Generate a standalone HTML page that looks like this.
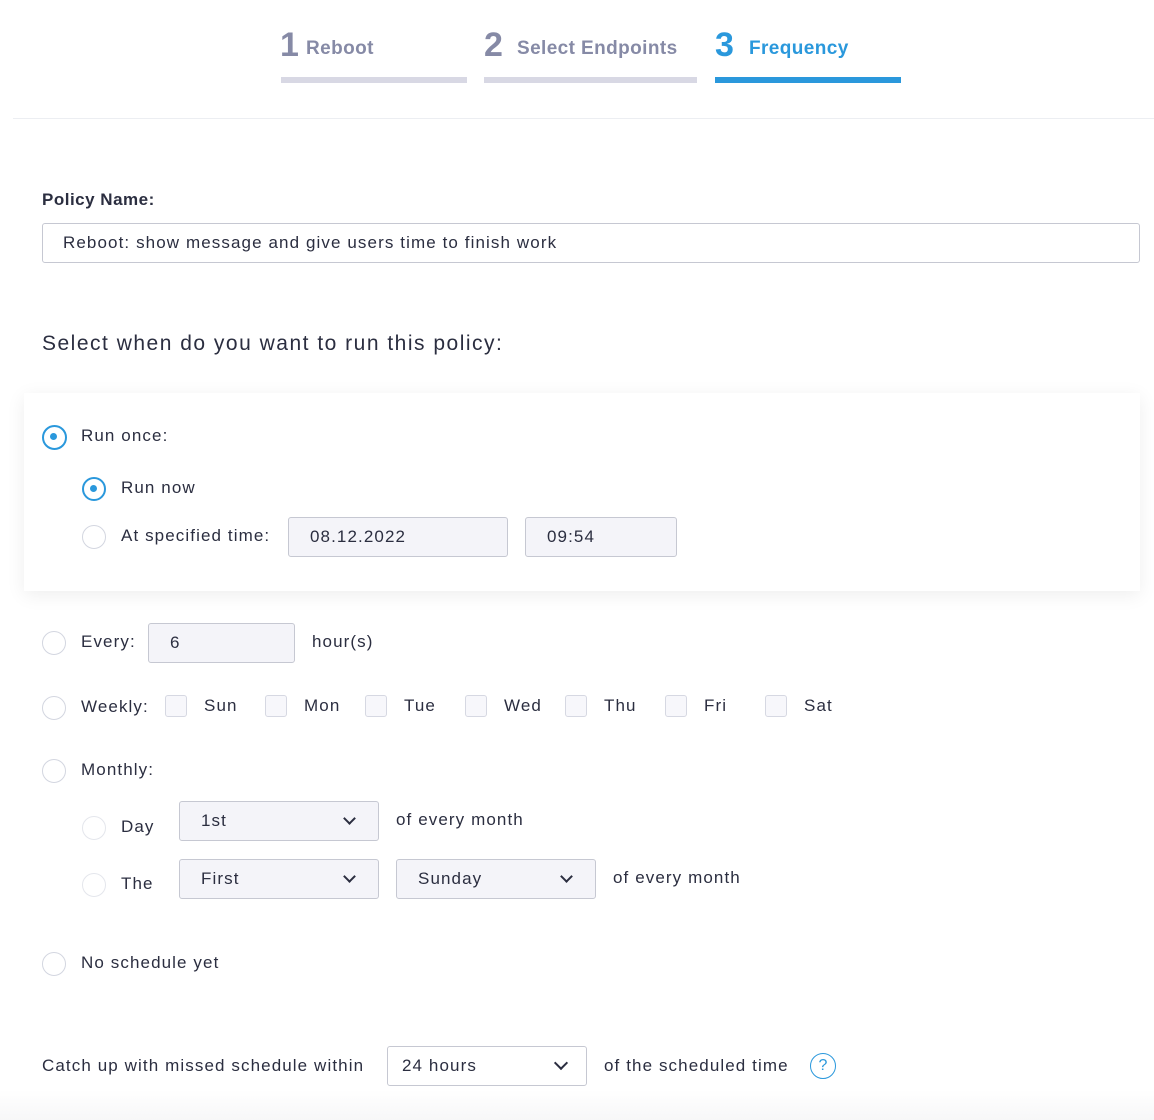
<!DOCTYPE html><html><head><style>
body{margin:0;width:1154px;height:1120px;background:#fff;font-family:"Liberation Sans",sans-serif;color:#2b2e40;position:relative;overflow:hidden}
.a{position:absolute}
.t{font-size:17px;line-height:20px;letter-spacing:1.1px}
.r{position:absolute;width:22px;height:22px;border:1.5px solid #d3d6e0;border-radius:50%;box-sizing:border-box}
.r.on{border:2px solid #2a98dc}
.r.on::after{content:"";position:absolute;left:6px;top:6px;width:7px;height:7px;border-radius:50%;background:#2a98dc}
.in{position:absolute;box-sizing:border-box;border:1px solid #c6c8d2;border-radius:3px;background:#f4f4f9;font-size:17px;letter-spacing:1.1px;padding-left:21px;line-height:38px;height:40px}
.cb{position:absolute;width:22px;height:22px;border:1px solid #d6d8e2;border-radius:3px;background:#f7f7fb;box-sizing:border-box;top:695px}
.chev{position:absolute;right:24px;top:12px;width:7px;height:7px;border-right:2px solid #2b2e40;border-bottom:2px solid #2b2e40;transform:rotate(45deg)}
.step{position:absolute;font-weight:bold;color:#868aa6}
</style></head><body>
<div class="step" style="left:280px;top:26px;font-size:34px">1</div>
<div class="step" style="left:306px;top:38px;font-size:19px;letter-spacing:0.4px">Reboot</div>
<div class="a" style="left:281px;top:77px;width:186px;height:6px;background:#d8d8e4"></div>
<div class="step" style="left:484px;top:26px;font-size:34px">2</div>
<div class="step" style="left:517px;top:38px;font-size:19px;letter-spacing:0.4px">Select Endpoints</div>
<div class="a" style="left:484px;top:77px;width:213px;height:6px;background:#d8d8e4"></div>
<div class="step" style="left:715px;top:26px;font-size:34px;color:#2a98dc">3</div>
<div class="step" style="left:749px;top:38px;font-size:19px;color:#2a98dc;letter-spacing:0.4px">Frequency</div>
<div class="a" style="left:715px;top:77px;width:186px;height:6px;background:#2a98dc"></div>
<div class="a" style="left:13px;top:118px;width:1141px;height:1px;background:#eceef2"></div>

<div class="a t" style="left:42px;top:190px;font-weight:bold;letter-spacing:0.5px">Policy Name:</div>
<div class="a" style="left:42px;top:223px;width:1098px;height:40px;border:1px solid #c6c8d2;border-radius:3px;box-sizing:border-box;font-size:17px;letter-spacing:1.1px;line-height:38px;padding-left:20px">Reboot: show message and give users time to finish work</div>
<div class="a" style="left:42px;top:332px;font-size:21px;letter-spacing:1.5px">Select when do you want to run this policy:</div>

<div class="a" style="left:24px;top:393px;width:1116px;height:198px;background:#fff;box-shadow:0 4px 18px rgba(0,0,0,0.07)"></div>
<div class="r on" style="left:42px;top:425px;width:25px;height:25px"></div>
<div class="a t" style="left:81px;top:426px">Run once:</div>
<div class="r on" style="left:82px;top:477px;width:24px;height:24px"></div>
<div class="a t" style="left:121px;top:478px">Run now</div>
<div class="r" style="left:82px;top:525px;width:24px;height:24px"></div>
<div class="a t" style="left:121px;top:526px">At specified time:</div>
<div class="in" style="left:288px;top:517px;width:220px">08.12.2022</div>
<div class="in" style="left:525px;top:517px;width:152px">09:54</div>

<div class="r" style="left:42px;top:631px;width:24px;height:24px"></div>
<div class="a t" style="left:81px;top:632px">Every:</div>
<div class="in" style="left:148px;top:623px;width:147px">6</div>
<div class="a t" style="left:312px;top:632px">hour(s)</div>

<div class="r" style="left:42px;top:696px;width:24px;height:24px"></div>
<div class="a t" style="left:81px;top:697px">Weekly:</div>
<div class="cb" style="left:165px"></div><div class="a t" style="left:204px;top:696px">Sun</div>
<div class="cb" style="left:265px"></div><div class="a t" style="left:304px;top:696px">Mon</div>
<div class="cb" style="left:365px"></div><div class="a t" style="left:404px;top:696px">Tue</div>
<div class="cb" style="left:465px"></div><div class="a t" style="left:504px;top:696px">Wed</div>
<div class="cb" style="left:565px"></div><div class="a t" style="left:604px;top:696px">Thu</div>
<div class="cb" style="left:665px"></div><div class="a t" style="left:704px;top:696px">Fri</div>
<div class="cb" style="left:765px"></div><div class="a t" style="left:804px;top:696px">Sat</div>

<div class="r" style="left:42px;top:759px;width:24px;height:24px"></div>
<div class="a t" style="left:81px;top:760px">Monthly:</div>
<div class="r" style="left:82px;top:816px;width:24px;height:24px;border-color:#e4e6ec"></div>
<div class="a t" style="left:121px;top:817px">Day</div>
<div class="in" style="left:179px;top:801px;width:200px;background:#f4f4f9">1st<div class="chev"></div></div>
<div class="a t" style="left:396px;top:810px">of every month</div>
<div class="r" style="left:82px;top:873px;width:24px;height:24px;border-color:#e4e6ec"></div>
<div class="a t" style="left:121px;top:874px">The</div>
<div class="in" style="left:179px;top:859px;width:200px">First<div class="chev"></div></div>
<div class="in" style="left:396px;top:859px;width:200px">Sunday<div class="chev"></div></div>
<div class="a t" style="left:613px;top:868px">of every month</div>

<div class="r" style="left:42px;top:952px;width:24px;height:24px"></div>
<div class="a t" style="left:81px;top:953px">No schedule yet</div>

<div class="a" style="left:0;top:1090px;width:1154px;height:30px;background:linear-gradient(#fff,#f7f7f8)"></div>
<div class="a t" style="left:42px;top:1056px">Catch up with missed schedule within</div>
<div class="in" style="left:387px;top:1046px;width:200px;background:#fff;padding-left:14px">24 hours<div class="chev" style="right:20px;top:11px;width:8px;height:8px;border-width:2.5px"></div></div>
<div class="a t" style="left:604px;top:1056px">of the scheduled time</div>
<div class="a" style="left:810px;top:1053px;width:26px;height:26px;border:1.5px solid #2a98dc;border-radius:50%;box-sizing:border-box;color:#2a98dc;font-size:16px;text-align:center;line-height:23px">?</div>
</body></html>
